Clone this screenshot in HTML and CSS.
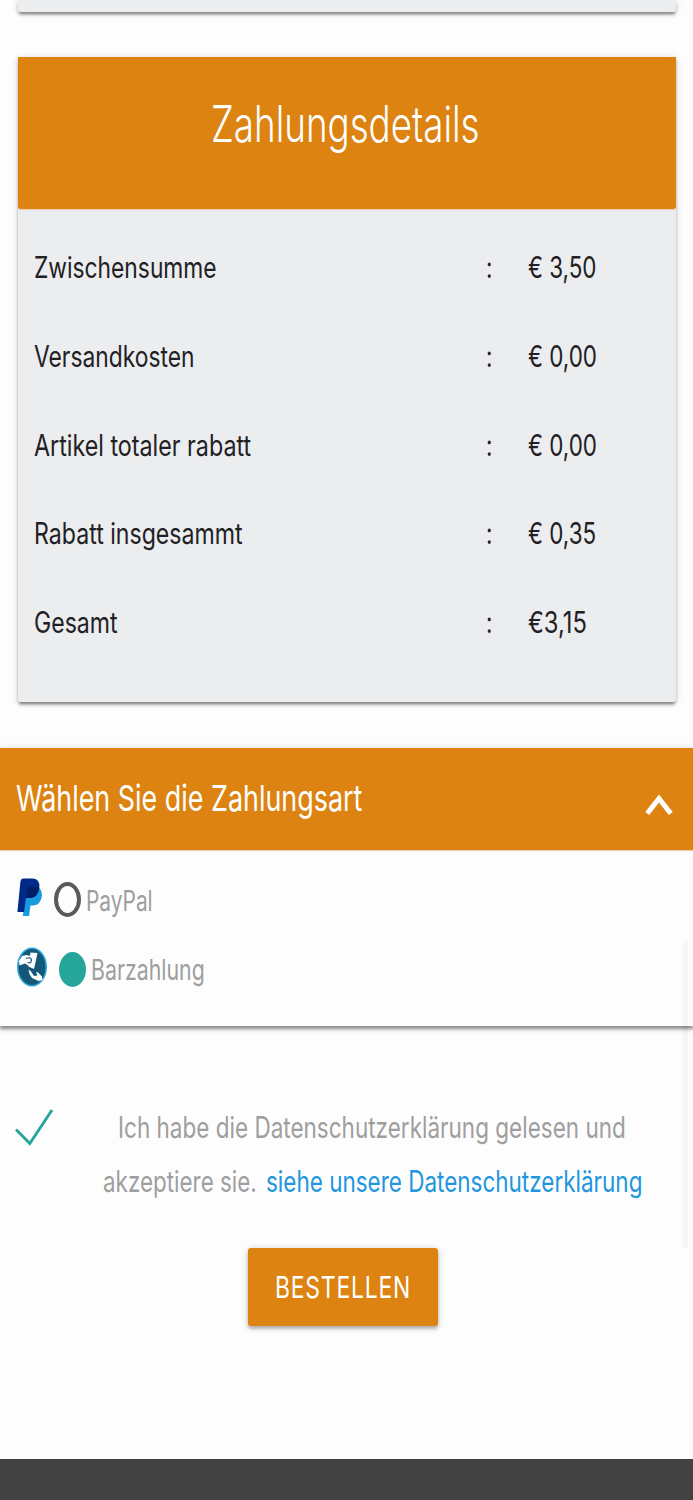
FILE: index.html
```html
<!DOCTYPE html>
<html lang="de">
<head>
<meta charset="utf-8">
<meta name="viewport" content="width=device-width">
<title>Zahlungsdetails</title>
<link rel="stylesheet" href="styles.css">
</head>
<body>
<main class="page">
  <section class="card previous"></section>

  <section class="card details">
    <h1 class="card-title"><span class="t title-text">Zahlungsdetails</span></h1>
    <div class="rows">
      <div class="row"><span class="t label l1">Zwischensumme</span><span class="t colon">:</span><span class="t price">€ 3,50</span></div>
      <div class="row"><span class="t label l2">Versandkosten</span><span class="t colon">:</span><span class="t price">€ 0,00</span></div>
      <div class="row"><span class="t label l3">Artikel totaler rabatt</span><span class="t colon">:</span><span class="t price">€ 0,00</span></div>
      <div class="row"><span class="t label l4">Rabatt insgesammt</span><span class="t colon">:</span><span class="t price">€ 0,35</span></div>
      <div class="row"><span class="t label l5">Gesamt</span><span class="t colon">:</span><span class="t price total">€3,15</span></div>
    </div>
  </section>

  <section class="payment">
    <h2 class="payment-head">
      <span class="t head-text">Wählen Sie die Zahlungsart</span>
      <svg class="chevron" width="28" height="24" viewBox="0 0 28 24"><path d="M2.200 20.500 14 5.500 25.800 20.500" fill="none" stroke="#fff" stroke-width="5"/></svg>
    </h2>
    <div class="options">
      <label class="option paypal">
        <svg class="logo" width="26" height="39" viewBox="0 0 26 39">
          <path d="M10 10H22Q26 13 24.500 20Q22.500 27.500 15.500 27.500H13.500L12 38H5.800L7 30Z" fill="#179bde"/>
          <path d="M6 .5H15Q23.500 .5 22.300 10Q21 20 12 20H9L7 34H.4L3.500 3Q4 .5 6 .5Z" fill="#00298a"/>
          <path d="M10.500 9.500Q16 8 22.300 10Q21 20 12 20H9Z" fill="#001f66"/>
        </svg>
        <span class="radio"></span><span class="t name n1">PayPal</span>
      </label>
      <label class="option cash">
        <svg class="logo" width="30" height="40" viewBox="0 0 30 40">
          <ellipse cx="15" cy="20" rx="14.200" ry="18.800" fill="#145878" stroke="#2ba5df" stroke-width="1.500"/>
          <path d="M13.500 5.500 20.500 6 17 22 11.500 19.500Z" fill="#fff"/>
          <path d="M2 14 5 9 9 8 14 9 17 12 16 16 12 19 8 16.500 2.500 18.500Z" fill="#fff"/>
          <path d="M9 11.500Q14 9.500 14.500 13Q14 17 10.500 15.500" fill="none" stroke="#145878" stroke-width="1.200"/>
          <path d="M11.500 22.500 14 24.500 17 29 20.500 28.500 19 25 21 25.500 25 29.500 25.500 33 21.500 34 15 31 12.500 27Z" fill="#fff"/>
        </svg>
        <span class="radio on"></span><span class="t name n2">Barzahlung</span>
      </label>
    </div>
  </section>

  <section class="privacy">
    <svg class="check" width="40" height="40" viewBox="0 0 40 40"><path d="M1 21.500 14.800 35.500 37 2" fill="none" stroke="#26a69a" stroke-width="2.900"/></svg>
    <div class="privacy-text">
      <div class="line first"><span class="t p1">Ich habe die Datenschutzerklärung gelesen und</span></div>
      <div class="line"><span class="t p2">akzeptiere sie.</span><a class="t link">siehe unsere Datenschutzerklärung</a></div>
    </div>
  </section>

  <button class="order"><span class="t order-text">BESTELLEN</span></button>
  <footer class="footer"></footer>
  <div class="scrollbar"></div>
</main>
</body>
</html>
```
FILE: styles.css
```css
* { box-sizing: border-box; }
body { margin: 0; background: #fdfdfd; font-family: Inter, "Liberation Sans", sans-serif; color: #212124; }
.page { position: relative; display: flex; flex-direction: column; height: 1500px; overflow: hidden; }
h1, h2 { margin: 0; font-weight: inherit; }

/* Narrow lettering: each text is condensed horizontally from its left edge. */
.t { display: block; width: 0; white-space: nowrap; font-size: 29.5px; line-height: 40px; transform: scaleX(var(--sx, .76)); transform-origin: 0 50%; }

.card { margin: 0 17.5px 0 18px; background: #ecedef; border-radius: 3px; box-shadow: 0 3px 3px rgba(0,0,0,.24), 0 4px 2px -2px rgba(0,0,0,.2), 0 1px 7px rgba(0,0,0,.16); }
.previous { flex: none; height: 12px; border-radius: 0 0 3px 3px; }
.details { flex: none; height: 645px; margin-top: 45px; border-radius: 0 0 3px 3px; }
.card-title { height: 151.5px; padding: 48px 0 0 193.4px; background: #dc8312; border-radius: 0 0 3px 3px; box-shadow: 0 1px 1px rgba(220,131,18,.3); }
.title-text { --sx: .735; color: #fff; font-size: 50px; font-weight: 300; line-height: 38px; }
.rows { padding-top: 14.2px; }
.row { display: grid; grid-template-columns: 452.4px 42px 100px; align-items: center; height: 88.75px; padding-left: 16px; }
.l1, .l2 { --sx: .773; }
.l3 { --sx: .789; }
.l4 { --sx: .784; }
.l5 { --sx: .782; }
.total { --sx: .805; }

.payment { flex: none; height: 278px; margin-top: 46px; background: #fdfdfd; box-shadow: 0 3px 2px rgba(0,0,0,.25), 0 4px 5px rgba(0,0,0,.18), 0 0 6px rgba(0,0,0,.14); }
.payment-head { display: flex; justify-content: space-between; height: 102px; padding: 30px 20px 0 16px; background: #dc8312; box-shadow: 0 1px 1px rgba(150,80,30,.25); }
.head-text { --sx: .747; color: #fff; font-size: 36px; }
.chevron { margin-top: 15px; }
.option { display: flex; align-items: center; color: #9e9e9e; }
.paypal { height: 70px; padding: 29px 0 0 17px; }
.paypal .logo { margin: -5px 11px 0 0; }
.cash { height: 69px; padding: 29px 0 0 17px; }
.cash .logo { margin: -5px 11.5px 0 0; }
.radio { width: 27px; height: 35px; margin-right: 5px; border: 4px solid #5a5a5a; border-radius: 50%; }
.radio.on { border: 0; background: #26a69a; }
.name { font-size: 28.5px; padding-top: 2px; }
.n1 { --sx: .732; }
.n2 { --sx: .748; }

.privacy { display: flex; flex: none; height: 176px; margin-top: 46px; color: #9e9e9e; }
.check { margin: 36px 48px 0 15px; }
.line { display: flex; height: 54px; align-items: center; }
.privacy-text { padding-top: 28px; }
.first { padding-left: 15px; }
.p1 { --sx: .763; }
.p2 { flex: 0 0 163px; }
.link { --sx: .762; color: #2196dc; }

.order { flex: none; width: 190px; height: 78px; margin: 0 0 0 248px; padding: 0 0 0 27px; border: 0; border-radius: 3px; background: #dc8312; color: #fff; font-family: inherit; box-shadow: 0 3px 3px rgba(0,0,0,.2), 0 1px 7px rgba(0,0,0,.2); }
.order-text { --sx: .777; letter-spacing: 1px; }
.footer { flex: none; height: 41px; margin-top: auto; background: #424242; }
.scrollbar { position: absolute; left: 683px; top: 940px; width: 5px; height: 308px; border-radius: 3px; background: rgba(0,0,0,.03); }
```
